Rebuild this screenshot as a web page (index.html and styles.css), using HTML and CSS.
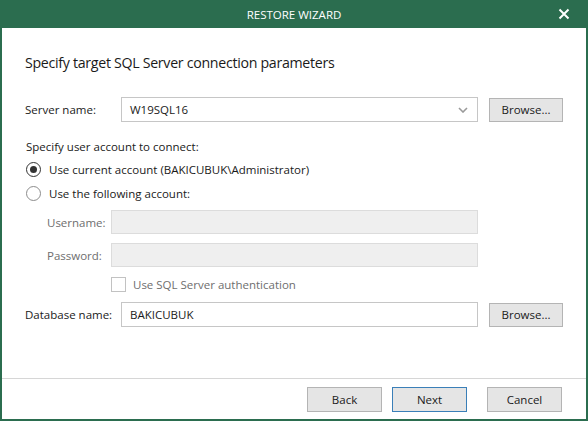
FILE: index.html
```html
<!DOCTYPE html>
<html>
<head>
<meta charset="utf-8">
<link rel="stylesheet" href="styles.css">
</head>
<body>
<div class="window">
  <div class="titlebar">
    <span class="title">RESTORE WIZARD</span>
    <svg class="close" width="12" height="12" viewBox="0 0 12 12"><path d="M1.5 1.5 L10.5 10.5 M10.5 1.5 L1.5 10.5" stroke="#fff" stroke-width="2" fill="none"/></svg>
  </div>
  <div class="frame">
    <div class="content">
      <h1 class="heading">Specify target SQL Server connection parameters</h1>
      <div class="row row-server">
        <label class="lbl">Server name:</label>
        <div class="input combo"><span>W19SQL16</span>
          <svg class="arrow" width="10" height="6" viewBox="0 0 10 6"><path d="M1 1 L5 5 L9 1" stroke="#9a9a9a" stroke-width="1.6" fill="none"/></svg>
        </div>
        <button class="btn">Browse...</button>
      </div>
      <div class="section-label">Specify user account to connect:</div>
      <div class="radio-row first"><span class="radio checked"></span><span>Use current account (BAKICUBUK\Administrator)</span></div>
      <div class="radio-row"><span class="radio"></span><span>Use the following account:</span></div>
      <div class="row sub row-user">
        <label class="lbl sublbl disabled">Username:</label>
        <div class="input wide dis"></div>
      </div>
      <div class="row sub row-pass">
        <label class="lbl sublbl disabled">Password:</label>
        <div class="input wide dis"></div>
      </div>
      <div class="check-row"><span class="checkbox"></span><span class="disabled">Use SQL Server authentication</span></div>
      <div class="row row-db">
        <label class="lbl">Database name:</label>
        <div class="input"><span>BAKICUBUK</span></div>
        <button class="btn">Browse...</button>
      </div>
    </div>
    <div class="footer">
      <button class="btn fbtn">Back</button>
      <button class="btn fbtn default">Next</button>
      <button class="btn fbtn cancel">Cancel</button>
    </div>
  </div>
</div>
</body>
</html>
```

FILE: styles.css
```css
html, body {
  margin: 0;
  padding: 0;
  background: #fff;
}
body {
  font-family: "Open Sans", "Noto Sans", sans-serif;
  font-size: 11.5px;
  color: #1a1a1a;
}
.window {
  width: 588px;
  height: 421px;
  display: flex;
  flex-direction: column;
  background: #2b6d4f;
}
.titlebar {
  height: 28px;
  flex: none;
  display: flex;
  align-items: center;
  justify-content: center;
  position: relative;
}
.title {
  color: #fff;
  font-size: 11.5px;
}
.close {
  position: absolute;
  right: 18px;
  top: 8px;
}
.frame {
  flex: 1;
  margin: 0 2px 2px 2px;
  background: #fff;
  display: flex;
  flex-direction: column;
}
.content {
  flex: 1;
  padding: 0 24px 0 23px;
  display: flex;
  flex-direction: column;
}
.heading {
  font-weight: normal;
  font-size: 14.2px;
  letter-spacing: -0.3px;
  margin: 0;
  margin-top: 25px;
  height: 20px;
  line-height: 20px;
  color: #1a1a1a;
}
.row {
  display: flex;
  align-items: center;
}
.lbl {
  width: 96px;
  flex: none;
}
.row-server {
  margin-top: 24px;
  height: 25px;
}
.input {
  box-sizing: border-box;
  width: 357px;
  height: 25px;
  border: 1px solid #c6c6c6;
  background: #fff;
  display: flex;
  align-items: center;
  padding-left: 8px;
  flex: none;
}
.combo {
  position: relative;
}
.arrow {
  position: absolute;
  right: 9px;
  top: 9px;
}
.btn {
  font-family: inherit;
  font-size: 11.5px;
  color: #1a1a1a;
  box-sizing: border-box;
  width: 74px;
  height: 24px;
  margin-left: 11px;
  background: #e5e5e5;
  border: 1px solid #b4b4b4;
  padding: 0;
  flex: none;
}
.section-label {
  margin-top: 17px;
  height: 16px;
  line-height: 16px;
  padding-left: 1px;
}
.radio-row {
  display: flex;
  align-items: center;
  height: 16px;
  margin-top: 8px;
  padding-left: 1px;
}
.radio-row.first {
  margin-top: 6px;
}
.radio {
  box-sizing: border-box;
  width: 15px;
  height: 15px;
  border-radius: 50%;
  border: 1px solid #8c8c8c;
  margin-right: 8px;
  position: relative;
  flex: none;
}
.radio.checked {
  border-color: #333;
}
.radio.checked::after {
  content: "";
  position: absolute;
  left: 3px;
  top: 3px;
  width: 7px;
  height: 7px;
  border-radius: 50%;
  background: #333;
}
.sub {
  padding-left: 22px;
}
.sublbl {
  width: 64px;
}
.row-user {
  margin-top: 9px;
  height: 24px;
}
.row-pass {
  margin-top: 9px;
  height: 24px;
}
.input.wide {
  width: 367px;
  height: 24px;
}
.input.dis {
  background: #efefef;
  border-color: #dcdcdc;
}
.disabled {
  color: #6e6e6e;
}
.check-row {
  display: flex;
  align-items: center;
  margin-top: 9px;
  height: 16px;
  padding-left: 86px;
}
.checkbox {
  box-sizing: border-box;
  width: 15px;
  height: 15px;
  border: 1px solid #c2c2c2;
  margin-right: 7px;
  flex: none;
}
.row-db {
  margin-top: 10px;
  height: 25px;
}
.footer {
  height: 40px;
  flex: none;
  border-top: 1px solid #d6d6d6;
  display: flex;
  align-items: center;
  justify-content: flex-end;
  padding-right: 24px;
}
.fbtn {
  width: 75px;
  height: 25px;
  margin-left: 10px;
}
.fbtn.default {
  border-color: #3a7fb8;
}
.fbtn.cancel {
  margin-left: 20px;
}
```
